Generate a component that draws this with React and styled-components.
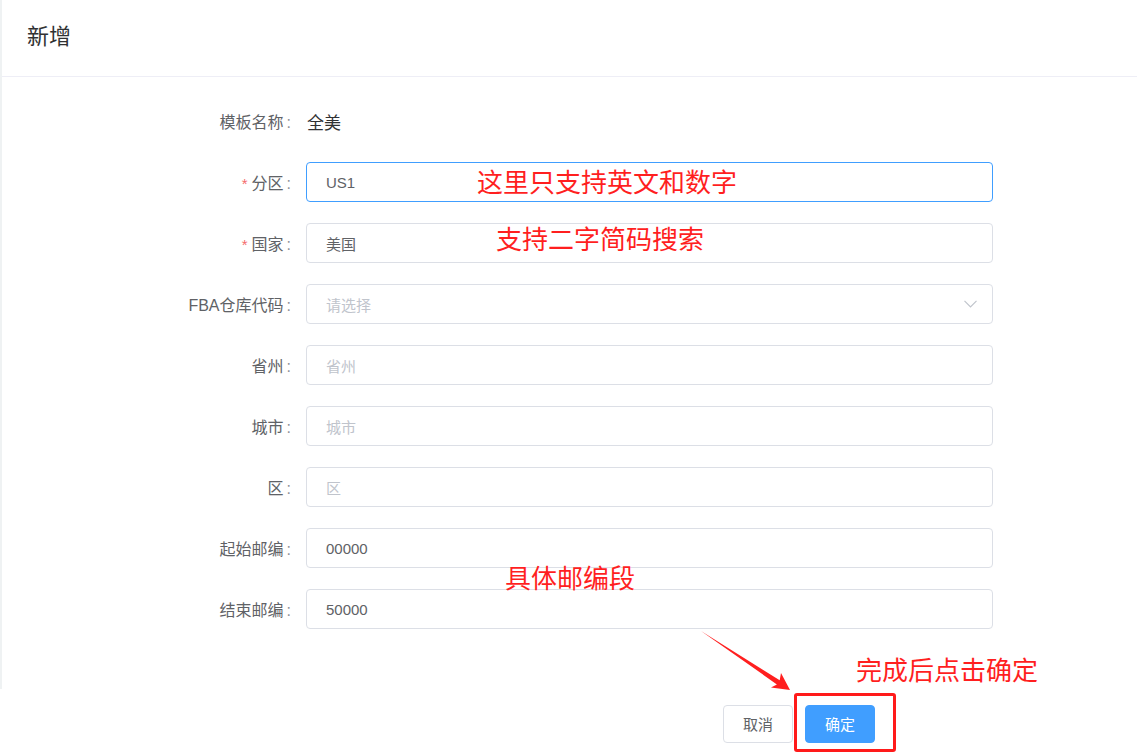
import React from "react";
import styled, { createGlobalStyle } from "styled-components";

const Global = createGlobalStyle`
  html, body { margin: 0; padding: 0; background: #fff; }
  body { font-family: "Liberation Sans", "Noto Sans CJK SC", sans-serif; }
  * { box-sizing: border-box; }
`;

const Page = styled.div`
  position: relative;
  width: 1137px;
  height: 755px;
  overflow: hidden;
  background: #fff;
`;

const Sheet = styled.div`
  height: 689px;
  border-left: 2px solid #eff2f3;
  display: flex;
  flex-direction: column;
`;

const Header = styled.div`
  height: 77px;
  border-bottom: 1px solid #eeeef6;
  display: flex;
  align-items: center;
  padding: 0 0 8px 25px;
  font-family: "Noto Sans CJK SC", sans-serif;
  font-size: 22px;
  color: #303133;
`;

const Form = styled.div`
  padding: 24px 144px 0 172px;
  display: flex;
  flex-direction: column;
  gap: 21px;
`;

const Row = styled.div`
  display: flex;
  align-items: center;
  height: 40px;
`;

const Label = styled.div`
  width: 132px;
  padding-right: 15px;
  text-align: right;
  font-size: 16px;
  color: #606266;
  white-space: nowrap;
`;

const Star = styled.span`
  color: #f56c6c;
  font-size: 15px;
  margin-right: 4px;
`;

const Colon = styled.span`
  color: #909399;
  margin-left: 3px;
`;

const PlainValue = styled.div`
  font-family: "Noto Sans CJK SC", sans-serif;
  font-size: 17px;
  color: #303133;
  padding-left: 1px;
`;

const InputBox = styled.div`
  position: relative;
  flex: 1;
  height: 40px;
  border: 1px solid ${(p) => (p.$focused ? "#409eff" : "#dcdfe6")};
  border-radius: 4px;
  display: flex;
  align-items: center;
  padding: 0 19px;
  font-size: 15px;
  color: ${(p) => (p.$placeholder ? "#c0c4cc" : "#606266")};
`;

const Chevron = styled.svg`
  position: absolute;
  right: 15px;
  top: 15px;
`;

const Footer = styled.div`
  display: flex;
  justify-content: flex-end;
  gap: 12px;
  padding: 16px 262px 0 0;
`;

const Button = styled.div`
  width: 70px;
  height: 38px;
  border-radius: 4px;
  display: flex;
  align-items: center;
  justify-content: center;
  padding-bottom: 2px;
  font-family: "Noto Sans CJK SC", sans-serif;
  font-size: 15px;
  border: 1px solid ${(p) => (p.$primary ? "#409eff" : "#dcdfe6")};
  background: ${(p) => (p.$primary ? "#409eff" : "#fff")};
  color: ${(p) => (p.$primary ? "#fff" : "#606266")};
`;

const Note = styled.div`
  position: absolute;
  left: ${(p) => p.$x}px;
  top: ${(p) => p.$y}px;
  font-family: "Noto Sans CJK SC", sans-serif;
  font-size: 26px;
  line-height: 26px;
  color: #ff1f1f;
  white-space: nowrap;
  pointer-events: none;
`;

const Highlight = styled.div`
  position: absolute;
  left: 794px;
  top: 693px;
  width: 102px;
  height: 59px;
  border: 3px solid #ff1a1a;
  border-radius: 3px;
  pointer-events: none;
`;

const ArrowLayer = styled.svg`
  position: absolute;
  left: 0;
  top: 0;
  pointer-events: none;
`;

const fields = [
  { label: "分区", required: true, value: "US1", focused: true },
  { label: "国家", required: true, value: "美国" },
  { label: "FBA仓库代码", placeholder: "请选择", select: true },
  { label: "省州", placeholder: "省州" },
  { label: "城市", placeholder: "城市" },
  { label: "区", placeholder: "区" },
  { label: "起始邮编", value: "00000" },
  { label: "结束邮编", value: "50000" },
];

export default function App() {
  return (
    <Page>
      <Global />
      <Sheet>
        <Header>新增</Header>
        <Form>
          <Row>
            <Label>
              模板名称<Colon>:</Colon>
            </Label>
            <PlainValue>全美</PlainValue>
          </Row>
          {fields.map((f) => (
            <Row key={f.label}>
              <Label>
                {f.required && <Star>*</Star>}
                {f.label}
                <Colon>:</Colon>
              </Label>
              <InputBox $focused={f.focused} $placeholder={!f.value}>
                {f.value || f.placeholder}
                {f.select && (
                  <Chevron width="13" height="8" viewBox="0 0 13 8">
                    <polyline
                      points="0.5,0.8 6.5,6.8 12.5,0.8"
                      fill="none"
                      stroke="#c0c4cc"
                      strokeWidth="1.2"
                    />
                  </Chevron>
                )}
              </InputBox>
            </Row>
          ))}
        </Form>
      </Sheet>
      <Footer>
        <Button>取消</Button>
        <Button $primary>确定</Button>
      </Footer>

      <Note $x={477} $y={168}>这里只支持英文和数字</Note>
      <Note $x={496} $y={225}>支持二字简码搜索</Note>
      <Note $x={505} $y={564}>具体邮编段</Note>
      <Note $x={856} $y={656}>完成后点击确定</Note>
      <Highlight />
      <ArrowLayer width="1137" height="755" viewBox="0 0 1137 755">
        <polygon
          points="701,631 779.7,680.2 781,673 790,690 771,687.5 776.9,684.4"
          fill="#ff1f1f"
        />
      </ArrowLayer>
    </Page>
  );
}
